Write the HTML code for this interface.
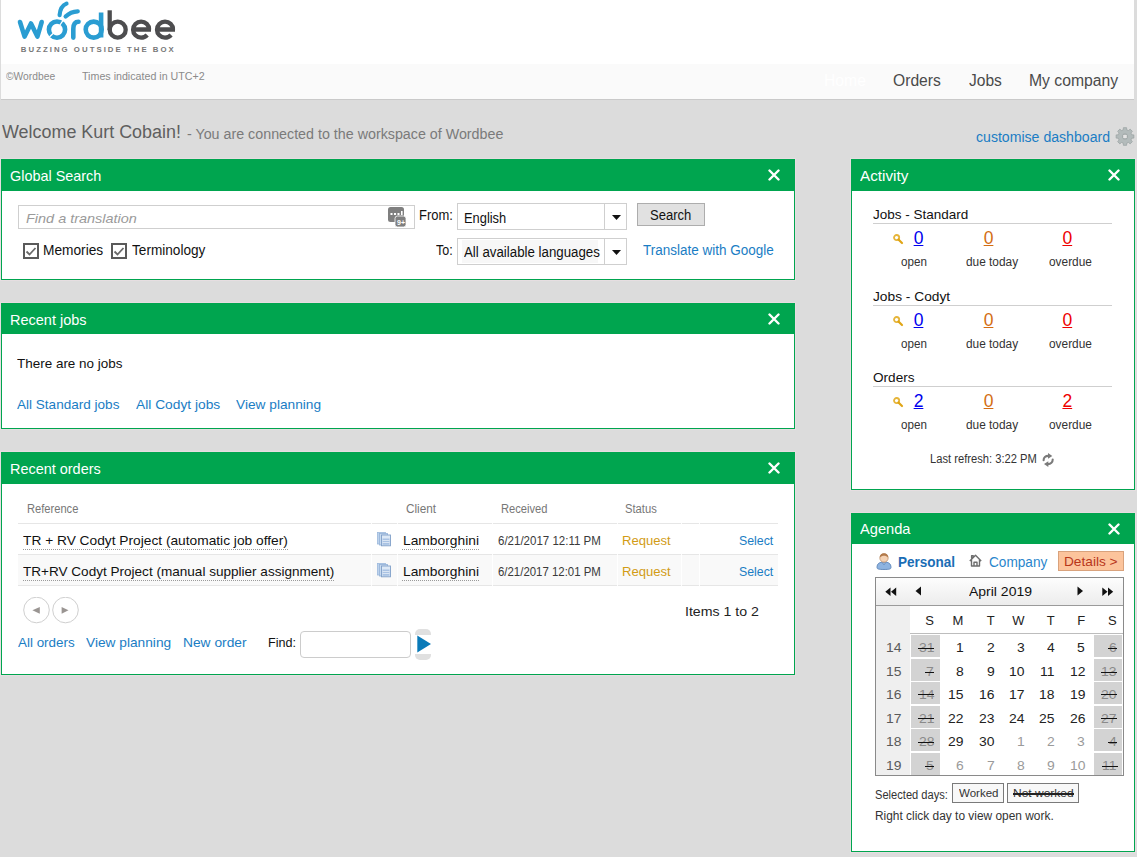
<!DOCTYPE html>
<html><head><meta charset="utf-8"><style>
html,body{margin:0;padding:0;}
body{width:1137px;height:857px;background:#dcdcdc;position:relative;overflow:hidden;font-family:"Liberation Sans", sans-serif;}
.t{position:absolute;white-space:nowrap;}
.b{position:absolute;}
.st s{text-decoration:none;background:linear-gradient(#111,#111) no-repeat 0 58%/100% 1.3px;}
</style></head><body>
<div class="b" style="left:1px;top:0px;width:1133px;height:64px;background:#fff;"></div>
<div class="b" style="left:1px;top:64px;width:1133px;height:35px;background:#fafafa;"></div>
<div class="b" style="left:1px;top:99px;width:1133px;height:1px;background:#c9c9c9;"></div>
<svg class="b" style="left:0;top:0" width="190" height="60" viewBox="0 0 190 60">
<g fill="none" stroke-linecap="round" stroke-linejoin="round" stroke="#2a9dd2" stroke-width="4.6">
<path d="M20 22 L24.6 36.6 L31 23.5 L37.4 36.6 L41.7 22"/>
<circle cx="57" cy="29.6" r="8.1"/>
<path d="M59.6 15.2 C60 9 62.5 5.2 66.5 3.6" stroke-width="4.2"/>
<path d="M65.6 16.6 C69 13.2 73 11.6 77.8 11.4" stroke-width="4.2"/>
<path d="M73.3 37.6 L73.3 29 C73.3 23.5 75.5 21.7 78.5 21.7"/>
<circle cx="93.7" cy="29.6" r="8"/>
<path d="M101.1 12.5 L101.1 37.5" stroke-linecap="butt"/>
</g>
<g stroke="#fff" stroke-width="1.3"><path d="M59.9 25 L63.6 19.6"/><path d="M53.6 33 L49.4 36.9"/></g>
<g fill="none" stroke="#4d4d4f" stroke-width="4.3">
<path d="M109.7 10.3 L109.7 30"/>
<circle cx="117.7" cy="29.65" r="8"/>
<path d="M133 29.5 L151 29.5 M149.1 29.5 C149.1 25 145.5 21.6 141.1 21.6 C136.7 21.6 133.1 25.2 133.1 29.65 C133.1 34.1 136.7 37.7 141.1 37.7 C143.6 37.7 145.6 36.7 147.2 35"/>
<path d="M157 29.5 L175 29.5 M173 29.5 C173 25 169.4 21.6 165 21.6 C160.6 21.6 157 25.2 157 29.65 C157 34.1 160.6 37.7 165 37.7 C167.5 37.7 169.5 36.7 171.1 35"/>
</g>
<text x="20.8" y="52" font-family="Liberation Sans" font-weight="bold" font-size="7.8" fill="#787878" textLength="153" lengthAdjust="spacing">BUZZING OUTSIDE THE BOX</text>
</svg>
<div class="t " style="left:5.80px;transform:scaleX(0.9793);transform-origin:0 0;top:71.31px;font-size:10.5px;line-height:10.5px;color:#8a8a8a;">&copy;Wordbee</div>
<div class="t " style="left:81.80px;transform:scaleX(1.0166);transform-origin:0 0;top:71.31px;font-size:10.5px;line-height:10.5px;color:#8a8a8a;">Times indicated in UTC+2</div>
<div class="t " style="left:823.70px;transform:scaleX(0.9808);transform-origin:0 0;top:72.66px;font-size:16px;line-height:16px;color:#ffffff;">Home</div>
<div class="t " style="left:893.20px;transform:scaleX(0.9779);transform-origin:0 0;top:72.66px;font-size:16px;line-height:16px;color:#4a4a4a;">Orders</div>
<div class="t " style="left:968.70px;transform:scaleX(0.9716);transform-origin:0 0;top:72.66px;font-size:16px;line-height:16px;color:#4a4a4a;">Jobs</div>
<div class="t " style="left:1029.40px;transform:scaleX(0.9832);transform-origin:0 0;top:72.66px;font-size:16px;line-height:16px;color:#4a4a4a;">My company</div>
<div class="t " style="left:2.10px;transform:scaleX(0.9954);transform-origin:0 0;top:123.46px;font-size:18px;line-height:18px;color:#5f5f5f;">Welcome Kurt Cobain!</div>
<div class="t " style="left:187.30px;transform:scaleX(1.0196);transform-origin:0 0;top:127.05px;font-size:14px;line-height:14px;color:#7a7a7a;">- You are connected to the workspace of Wordbee</div>
<div class="t " style="left:976.20px;transform:scaleX(1.0070);transform-origin:0 0;top:130.35px;font-size:14px;line-height:14px;color:#1a7dc4;">customise dashboard</div>
<svg class="b" style="left:1114.5px;top:126.5px" width="20" height="19" viewBox="0 0 20 19">
<path d="M16.68 7.78 L18.86 7.92 L18.86 11.08 L16.68 11.22 L15.94 13.01 L17.38 14.65 L15.15 16.88 L13.51 15.44 L11.72 16.18 L11.58 18.36 L8.42 18.36 L8.28 16.18 L6.49 15.44 L4.85 16.88 L2.62 14.65 L4.06 13.01 L3.32 11.22 L1.14 11.08 L1.14 7.92 L3.32 7.78 L4.06 5.99 L2.62 4.35 L4.85 2.12 L6.49 3.56 L8.28 2.82 L8.42 0.64 L11.58 0.64 L11.72 2.82 L13.51 3.56 L15.15 2.12 L17.38 4.35 L15.94 5.99Z" fill="#b3bbbb" stroke="#98a1a1" stroke-width="0.7" stroke-linejoin="round"/>
<rect x="7.7" y="7.2" width="4.6" height="4.6" rx="1.2" fill="#e4e4e4" stroke="#8f9898" stroke-width="0.8"/></svg>
<div class="b" style="left:0px;top:158px;width:796px;height:123px;background:#e6dee1;"></div>
<div class="b" style="left:1px;top:159px;width:794px;height:121px;background:#fff;border:1px solid #00a54f;box-sizing:border-box;"></div>
<div class="b" style="left:1px;top:159px;width:794px;height:32px;background:#00a54f;"></div>
<div class="t " style="left:10.30px;transform:scaleX(0.9939);transform-origin:0 0;top:168.93px;font-size:14.5px;line-height:14.5px;color:#fff;">Global Search</div>
<svg class="b" style="left:767.7px;top:169px" width="12" height="12" viewBox="0 0 12 12"><path d="M1.5 1.5L10.5 10.5M10.5 1.5L1.5 10.5" stroke="#fff" stroke-width="2.4" stroke-linecap="round"/></svg>
<div class="b" style="left:18px;top:205px;width:397px;height:24px;background:#fff;border:1px solid #cfcfcf;box-sizing:border-box;"></div>
<div class="t " style="left:25.50px;transform:scaleX(1.0710);transform-origin:0 0;top:212.27px;font-size:13.5px;line-height:13.5px;color:#9a9a9a;font-style:italic;">Find a translation</div>
<svg class="b" style="left:387px;top:206px" width="21" height="22" viewBox="0 0 21 22">
<rect x="1" y="1" width="16" height="15" rx="2.5" fill="#7f7f7f"/>
<rect x="8" y="10" width="11" height="11" rx="2.5" fill="#7f7f7f" stroke="#fff" stroke-width="0.8"/>
<g fill="#fff"><rect x="3.5" y="7" width="2" height="2"/><rect x="7" y="7" width="2" height="2"/><rect x="10.5" y="7" width="2" height="2"/><rect x="14" y="5" width="1.6" height="4"/></g>
<text x="10" y="19" font-family="Liberation Sans" font-weight="bold" font-size="7" fill="#fff">9+</text>
</svg>
<div class="b" style="left:23px;top:243px;width:16px;height:16px;border:2px solid #5a5a5a;box-sizing:border-box;background:#fff;"></div>
<svg class="b" style="left:23px;top:243px" width="16" height="16" viewBox="0 0 16 16"><path d="M3.5 8.5L6.5 11.5L12.5 5" fill="none" stroke="#6a6a6a" stroke-width="1.8"/></svg>
<div class="b" style="left:111px;top:243px;width:16px;height:16px;border:2px solid #5a5a5a;box-sizing:border-box;background:#fff;"></div>
<svg class="b" style="left:111px;top:243px" width="16" height="16" viewBox="0 0 16 16"><path d="M3.5 8.5L6.5 11.5L12.5 5" fill="none" stroke="#6a6a6a" stroke-width="1.8"/></svg>
<div class="t " style="left:42.70px;transform:scaleX(0.9795);transform-origin:0 0;top:243.15px;font-size:14px;line-height:14px;color:#111;">Memories</div>
<div class="t " style="left:132.10px;transform:scaleX(0.9727);transform-origin:0 0;top:243.15px;font-size:14px;line-height:14px;color:#111;">Terminology</div>
<div class="t " style="left:418.80px;transform:scaleX(0.9278);transform-origin:0 0;top:207.95px;font-size:14px;line-height:14px;color:#111;">From:</div>
<div class="t " style="left:436.00px;transform:scaleX(0.8935);transform-origin:0 0;top:243.15px;font-size:14px;line-height:14px;color:#111;">To:</div>
<div class="b" style="left:457px;top:203px;width:170px;height:27px;background:#fff;border:1px solid #cfcfcf;box-sizing:border-box;"></div>
<div class="b" style="left:604px;top:203px;width:1px;height:27px;background:#cfcfcf;"></div>
<svg class="b" style="left:611.5px;top:214.5px" width="9" height="5" viewBox="0 0 9 5"><path d="M0 0L9 0L4.5 5Z" fill="#111"/></svg>
<div class="b" style="left:457px;top:238px;width:170px;height:27px;background:#fff;border:1px solid #cfcfcf;box-sizing:border-box;"></div>
<div class="b" style="left:604px;top:238px;width:1px;height:27px;background:#cfcfcf;"></div>
<svg class="b" style="left:611.5px;top:249.5px" width="9" height="5" viewBox="0 0 9 5"><path d="M0 0L9 0L4.5 5Z" fill="#111"/></svg>
<div class="b" style="left:462px;top:240px;width:136px;height:23px;background:#f7f7f7;"></div>
<div class="t " style="left:464.30px;transform:scaleX(0.9190);transform-origin:0 0;top:210.85px;font-size:14px;line-height:14px;color:#111;">English</div>
<div class="t " style="left:464.30px;transform:scaleX(0.9489);transform-origin:0 0;top:244.65px;font-size:14px;line-height:14px;color:#111;">All available languages</div>
<div class="b" style="left:637px;top:203px;width:68px;height:23px;background:#e1e1e1;border:1px solid #adadad;box-sizing:border-box;"></div>
<div class="t " style="left:650.20px;transform:scaleX(0.9306);transform-origin:0 0;top:208.35px;font-size:14px;line-height:14px;color:#111;">Search</div>
<div class="t " style="left:643.00px;transform:scaleX(0.9642);transform-origin:0 0;top:242.85px;font-size:14px;line-height:14px;color:#1a7dc4;">Translate with Google</div>
<div class="b" style="left:0px;top:302px;width:796px;height:128px;background:#e6dee1;"></div>
<div class="b" style="left:1px;top:303px;width:794px;height:126px;background:#fff;border:1px solid #00a54f;box-sizing:border-box;"></div>
<div class="b" style="left:1px;top:303px;width:794px;height:31px;background:#00a54f;"></div>
<div class="t " style="left:10.30px;transform:scaleX(0.9992);transform-origin:0 0;top:312.53px;font-size:14.5px;line-height:14.5px;color:#fff;">Recent jobs</div>
<svg class="b" style="left:767.7px;top:313px" width="12" height="12" viewBox="0 0 12 12"><path d="M1.5 1.5L10.5 10.5M10.5 1.5L1.5 10.5" stroke="#fff" stroke-width="2.4" stroke-linecap="round"/></svg>
<div class="t " style="left:17.40px;transform:scaleX(0.9968);transform-origin:0 0;top:356.57px;font-size:13.5px;line-height:13.5px;color:#111;">There are no jobs</div>
<div class="t " style="left:17.40px;transform:scaleX(1.0033);transform-origin:0 0;top:398.27px;font-size:13.5px;line-height:13.5px;color:#1a7dc4;">All Standard jobs</div>
<div class="t " style="left:135.50px;transform:scaleX(1.0200);transform-origin:0 0;top:398.27px;font-size:13.5px;line-height:13.5px;color:#1a7dc4;">All Codyt jobs</div>
<div class="t " style="left:236.10px;transform:scaleX(1.0151);transform-origin:0 0;top:398.27px;font-size:13.5px;line-height:13.5px;color:#1a7dc4;">View planning</div>
<div class="b" style="left:0px;top:451px;width:796px;height:225px;background:#e6dee1;"></div>
<div class="b" style="left:1px;top:452px;width:794px;height:223px;background:#fff;border:1px solid #00a54f;box-sizing:border-box;"></div>
<div class="b" style="left:1px;top:452px;width:794px;height:32px;background:#00a54f;"></div>
<div class="t " style="left:10.30px;transform:scaleX(0.9960);transform-origin:0 0;top:461.53px;font-size:14.5px;line-height:14.5px;color:#fff;">Recent orders</div>
<svg class="b" style="left:767.7px;top:462px" width="12" height="12" viewBox="0 0 12 12"><path d="M1.5 1.5L10.5 10.5M10.5 1.5L1.5 10.5" stroke="#fff" stroke-width="2.4" stroke-linecap="round"/></svg>
<div class="t " style="left:26.70px;transform:scaleX(0.9281);transform-origin:0 0;top:502.84px;font-size:12px;line-height:12px;color:#777;">Reference</div>
<div class="t " style="left:405.70px;transform:scaleX(0.9817);transform-origin:0 0;top:502.84px;font-size:12px;line-height:12px;color:#777;">Client</div>
<div class="t " style="left:501.00px;transform:scaleX(0.9293);transform-origin:0 0;top:502.84px;font-size:12px;line-height:12px;color:#777;">Received</div>
<div class="t " style="left:625.00px;transform:scaleX(0.9347);transform-origin:0 0;top:502.84px;font-size:12px;line-height:12px;color:#777;">Status</div>
<div class="b" style="left:18px;top:523px;width:760px;height:1px;background:#e6e6e6;"></div>
<div class="b" style="left:18px;top:554px;width:760px;height:1px;background:#e6e6e6;"></div>
<div class="b" style="left:18px;top:555px;width:760px;height:30px;background:#f9f9f9;"></div>
<div class="b" style="left:18px;top:585px;width:760px;height:1px;background:#e6e6e6;"></div>
<div class="b" style="left:371px;top:523px;width:1px;height:63px;background:rgba(255,255,255,0.9);"></div>
<div class="b" style="left:397px;top:523px;width:1px;height:63px;background:rgba(255,255,255,0.9);"></div>
<div class="b" style="left:492px;top:523px;width:1px;height:63px;background:rgba(255,255,255,0.9);"></div>
<div class="b" style="left:617px;top:523px;width:1px;height:63px;background:rgba(255,255,255,0.9);"></div>
<div class="b" style="left:681px;top:523px;width:1px;height:63px;background:rgba(255,255,255,0.9);"></div>
<div class="b" style="left:699px;top:523px;width:1px;height:63px;background:rgba(255,255,255,0.9);"></div>
<div class="t " style="left:23.10px;transform:scaleX(1.0176);transform-origin:0 0;top:534.17px;font-size:13.5px;line-height:13.5px;color:#111;">TR + RV Codyt Project (automatic job offer)</div>
<div class="b" style="left:23px;top:549.1px;width:264.9px;height:1px;border-top:1px dotted #9a9a9a;box-sizing:border-box;"></div>
<div class="t " style="left:402.50px;transform:scaleX(1.0226);transform-origin:0 0;top:534.17px;font-size:13.5px;line-height:13.5px;color:#111;">Lamborghini</div>
<div class="b" style="left:402px;top:549.1px;width:77px;height:1px;border-top:1px dotted #9a9a9a;box-sizing:border-box;"></div>
<div class="t " style="left:498.00px;transform:scaleX(0.9588);transform-origin:0 0;top:535.14px;font-size:12px;line-height:12px;color:#3a3a3a;">6/21/2017 12:11 PM</div>
<div class="t " style="left:622.00px;transform:scaleX(1.0057);transform-origin:0 0;top:533.50px;font-size:13px;line-height:13px;color:#d29c16;">Request</div>
<div class="t " style="left:739.30px;transform:scaleX(0.9139);transform-origin:0 0;top:534.17px;font-size:13.5px;line-height:13.5px;color:#1a7dc4;">Select</div>
<svg class="b" style="left:377px;top:532.1px" width="15" height="15" viewBox="0 0 15 15">
<rect x="0.5" y="0.5" width="8" height="11.5" fill="#bcd2ec" stroke="#9cb8dc" stroke-width="0.8"/>
<rect x="2.5" y="1.5" width="8" height="11.5" fill="#c8dbf0" stroke="#94b2d8" stroke-width="0.8"/>
<rect x="4.5" y="3" width="9" height="10.8" fill="#dce8f6" stroke="#7f9fc8" stroke-width="0.9"/>
<rect x="5.5" y="6.5" width="7" height="6.3" fill="#a9c2e3"/>
<path d="M5.5 8.5H12.5M5.5 10.5H12.5" stroke="#e6eef8" stroke-width="0.8"/></svg>
<div class="t " style="left:23.10px;transform:scaleX(1.0038);transform-origin:0 0;top:565.47px;font-size:13.5px;line-height:13.5px;color:#111;">TR+RV Codyt Project (manual supplier assignment)</div>
<div class="b" style="left:23px;top:580.4px;width:311.3px;height:1px;border-top:1px dotted #9a9a9a;box-sizing:border-box;"></div>
<div class="t " style="left:402.50px;transform:scaleX(1.0226);transform-origin:0 0;top:565.47px;font-size:13.5px;line-height:13.5px;color:#111;">Lamborghini</div>
<div class="b" style="left:402px;top:580.4px;width:77px;height:1px;border-top:1px dotted #9a9a9a;box-sizing:border-box;"></div>
<div class="t " style="left:498.00px;transform:scaleX(0.9513);transform-origin:0 0;top:566.44px;font-size:12px;line-height:12px;color:#3a3a3a;">6/21/2017 12:01 PM</div>
<div class="t " style="left:622.00px;transform:scaleX(1.0057);transform-origin:0 0;top:564.80px;font-size:13px;line-height:13px;color:#d29c16;">Request</div>
<div class="t " style="left:739.30px;transform:scaleX(0.9139);transform-origin:0 0;top:565.47px;font-size:13.5px;line-height:13.5px;color:#1a7dc4;">Select</div>
<svg class="b" style="left:377px;top:563.4px" width="15" height="15" viewBox="0 0 15 15">
<rect x="0.5" y="0.5" width="8" height="11.5" fill="#bcd2ec" stroke="#9cb8dc" stroke-width="0.8"/>
<rect x="2.5" y="1.5" width="8" height="11.5" fill="#c8dbf0" stroke="#94b2d8" stroke-width="0.8"/>
<rect x="4.5" y="3" width="9" height="10.8" fill="#dce8f6" stroke="#7f9fc8" stroke-width="0.9"/>
<rect x="5.5" y="6.5" width="7" height="6.3" fill="#a9c2e3"/>
<path d="M5.5 8.5H12.5M5.5 10.5H12.5" stroke="#e6eef8" stroke-width="0.8"/></svg>
<svg class="b" style="left:23px;top:597px" width="27" height="27" viewBox="0 0 27 27"><circle cx="13.5" cy="13" r="12.8" fill="#fff" stroke="#cfcfcf" stroke-width="1"/><path d="M16.8 9.9L9.4 13.3L16.8 16.7Z" fill="#9a9592"/></svg>
<svg class="b" style="left:52px;top:597px" width="27" height="27" viewBox="0 0 27 27"><circle cx="13.5" cy="13" r="12.8" fill="#fff" stroke="#cfcfcf" stroke-width="1"/><path d="M9.6 9.9L16.5 13.3L9.6 16.7Z" fill="#9a9592"/></svg>
<div class="t " style="left:685.00px;transform:scaleX(1.0491);transform-origin:0 0;top:604.57px;font-size:13.5px;line-height:13.5px;color:#222;">Items 1 to 2</div>
<div class="t " style="left:17.60px;transform:scaleX(0.9941);transform-origin:0 0;top:636.07px;font-size:13.5px;line-height:13.5px;color:#1a7dc4;">All orders</div>
<div class="t " style="left:86.10px;transform:scaleX(1.0163);transform-origin:0 0;top:636.07px;font-size:13.5px;line-height:13.5px;color:#1a7dc4;">View planning</div>
<div class="t " style="left:183.10px;transform:scaleX(1.0208);transform-origin:0 0;top:636.07px;font-size:13.5px;line-height:13.5px;color:#1a7dc4;">New order</div>
<div class="t " style="left:267.60px;transform:scaleX(0.9322);transform-origin:0 0;top:636.07px;font-size:13.5px;line-height:13.5px;color:#111;">Find:</div>
<div class="b" style="left:300px;top:631px;width:111px;height:27px;background:#fff;border:1px solid #cccccc;border-radius:4px;box-sizing:border-box;"></div>
<div class="b" style="left:415px;top:629px;width:16px;height:31px;background:#e0e0e0;border-radius:5px;"></div>
<div class="b" style="left:415px;top:634.5px;width:16px;height:19.5px;background:#fff;"></div>
<svg class="b" style="left:417px;top:635px" width="15" height="18" viewBox="0 0 15 18"><path d="M0.3 0.5L14 9L0.3 17.5Z" fill="#0a7ab8"/></svg>
<div class="b" style="left:850px;top:158px;width:286px;height:333px;background:#e6dee1;"></div>
<div class="b" style="left:851px;top:159px;width:284px;height:331px;background:#fff;border:1px solid #00a54f;box-sizing:border-box;"></div>
<div class="b" style="left:851px;top:159px;width:284px;height:32px;background:#00a54f;"></div>
<div class="t " style="left:859.50px;transform:scaleX(1.0525);transform-origin:0 0;top:168.63px;font-size:14.5px;line-height:14.5px;color:#fff;">Activity</div>
<svg class="b" style="left:1107.7px;top:169px" width="12" height="12" viewBox="0 0 12 12"><path d="M1.5 1.5L10.5 10.5M10.5 1.5L1.5 10.5" stroke="#fff" stroke-width="2.4" stroke-linecap="round"/></svg>
<div class="t " style="left:873.10px;transform:scaleX(0.9999);transform-origin:0 0;top:208.37px;font-size:13.5px;line-height:13.5px;color:#111;">Jobs - Standard</div>
<div class="b" style="left:873px;top:223px;width:239px;height:1px;background:#cfcfcf;"></div>
<svg class="b" style="left:893.3px;top:234.3px" width="11" height="11" viewBox="0 0 11 11"><circle cx="3.6" cy="3.6" r="2.6" fill="none" stroke="#e6b53a" stroke-width="1.8"/><path d="M5.5 5.5L9 9" stroke="#e0a516" stroke-width="2.2" stroke-linecap="round"/></svg>
<div class="t " style="left:618.5px;width:600px;text-align:center;top:230.19px;font-size:17.5px;line-height:17.5px;color:#0000ee;text-decoration:underline;">0</div>
<div class="t " style="left:688.5px;width:600px;text-align:center;top:230.19px;font-size:17.5px;line-height:17.5px;color:#d36d12;text-decoration:underline;">0</div>
<div class="t " style="left:767.3px;width:600px;text-align:center;top:230.19px;font-size:17.5px;line-height:17.5px;color:#ee0000;text-decoration:underline;">0</div>
<div class="t " style="left:900.60px;transform:scaleX(0.9700);transform-origin:0 0;top:256.24px;font-size:12px;line-height:12px;color:#333;">open</div>
<div class="t " style="left:965.60px;transform:scaleX(0.9879);transform-origin:0 0;top:256.24px;font-size:12px;line-height:12px;color:#333;">due today</div>
<div class="t " style="left:1049.40px;transform:scaleX(0.9889);transform-origin:0 0;top:256.24px;font-size:12px;line-height:12px;color:#333;">overdue</div>
<div class="t " style="left:873.10px;transform:scaleX(1.0184);transform-origin:0 0;top:289.87px;font-size:13.5px;line-height:13.5px;color:#111;">Jobs - Codyt</div>
<div class="b" style="left:873px;top:304.5px;width:239px;height:1px;background:#cfcfcf;"></div>
<svg class="b" style="left:893.3px;top:315.8px" width="11" height="11" viewBox="0 0 11 11"><circle cx="3.6" cy="3.6" r="2.6" fill="none" stroke="#e6b53a" stroke-width="1.8"/><path d="M5.5 5.5L9 9" stroke="#e0a516" stroke-width="2.2" stroke-linecap="round"/></svg>
<div class="t " style="left:618.5px;width:600px;text-align:center;top:311.69px;font-size:17.5px;line-height:17.5px;color:#0000ee;text-decoration:underline;">0</div>
<div class="t " style="left:688.5px;width:600px;text-align:center;top:311.69px;font-size:17.5px;line-height:17.5px;color:#d36d12;text-decoration:underline;">0</div>
<div class="t " style="left:767.3px;width:600px;text-align:center;top:311.69px;font-size:17.5px;line-height:17.5px;color:#ee0000;text-decoration:underline;">0</div>
<div class="t " style="left:900.60px;transform:scaleX(0.9700);transform-origin:0 0;top:337.74px;font-size:12px;line-height:12px;color:#333;">open</div>
<div class="t " style="left:965.60px;transform:scaleX(0.9879);transform-origin:0 0;top:337.74px;font-size:12px;line-height:12px;color:#333;">due today</div>
<div class="t " style="left:1049.40px;transform:scaleX(0.9889);transform-origin:0 0;top:337.74px;font-size:12px;line-height:12px;color:#333;">overdue</div>
<div class="t " style="left:873.10px;transform:scaleX(1.0062);transform-origin:0 0;top:371.37px;font-size:13.5px;line-height:13.5px;color:#111;">Orders</div>
<div class="b" style="left:873px;top:386px;width:239px;height:1px;background:#cfcfcf;"></div>
<svg class="b" style="left:893.3px;top:397.3px" width="11" height="11" viewBox="0 0 11 11"><circle cx="3.6" cy="3.6" r="2.6" fill="none" stroke="#e6b53a" stroke-width="1.8"/><path d="M5.5 5.5L9 9" stroke="#e0a516" stroke-width="2.2" stroke-linecap="round"/></svg>
<div class="t " style="left:618.5px;width:600px;text-align:center;top:393.19px;font-size:17.5px;line-height:17.5px;color:#0000ee;text-decoration:underline;">2</div>
<div class="t " style="left:688.5px;width:600px;text-align:center;top:393.19px;font-size:17.5px;line-height:17.5px;color:#d36d12;text-decoration:underline;">0</div>
<div class="t " style="left:767.3px;width:600px;text-align:center;top:393.19px;font-size:17.5px;line-height:17.5px;color:#ee0000;text-decoration:underline;">2</div>
<div class="t " style="left:900.60px;transform:scaleX(0.9700);transform-origin:0 0;top:419.24px;font-size:12px;line-height:12px;color:#333;">open</div>
<div class="t " style="left:965.60px;transform:scaleX(0.9879);transform-origin:0 0;top:419.24px;font-size:12px;line-height:12px;color:#333;">due today</div>
<div class="t " style="left:1049.40px;transform:scaleX(0.9889);transform-origin:0 0;top:419.24px;font-size:12px;line-height:12px;color:#333;">overdue</div>
<div class="t " style="left:929.60px;transform:scaleX(0.9310);transform-origin:0 0;top:453.44px;font-size:12px;line-height:12px;color:#333;">Last refresh: 3:22 PM</div>
<svg class="b" style="left:1041px;top:452px" width="14" height="16" viewBox="0 0 14 16"><g fill="none" stroke="#7a7a7a" stroke-width="2.1" stroke-linecap="round"><path d="M2.6 8.2C2.6 5.6 4.5 3.9 7.3 3.9"/><path d="M11.7 7.6C11.7 10.3 9.8 12.1 7 12.1"/></g><g fill="#7a7a7a"><path d="M7 1L11.3 3.9L7 6.8Z"/><path d="M7.3 9.2L3 12.1L7.3 15Z"/></g></svg>
<div class="b" style="left:850px;top:512px;width:286px;height:341px;background:#e6dee1;"></div>
<div class="b" style="left:851px;top:513px;width:284px;height:339px;background:#fff;border:1px solid #00a54f;box-sizing:border-box;"></div>
<div class="b" style="left:851px;top:513px;width:284px;height:31px;background:#00a54f;"></div>
<div class="t " style="left:859.50px;transform:scaleX(1.0095);transform-origin:0 0;top:522.23px;font-size:14.5px;line-height:14.5px;color:#fff;">Agenda</div>
<svg class="b" style="left:1107.7px;top:523px" width="12" height="12" viewBox="0 0 12 12"><path d="M1.5 1.5L10.5 10.5M10.5 1.5L1.5 10.5" stroke="#fff" stroke-width="2.4" stroke-linecap="round"/></svg>
<svg class="b" style="left:876px;top:552px" width="16" height="18" viewBox="0 0 16 18">
<path d="M1 15.5C1 11.5 3.5 10 8 10C12.5 10 15 11.5 15 15.5C15 17 13.5 17.5 8 17.5C2.5 17.5 1 17 1 15.5Z" fill="#8db3e0" stroke="#5f86b8" stroke-width="0.9"/>
<path d="M6 10.5L8 13L10 10.5" fill="none" stroke="#6d92c2" stroke-width="0.8"/>
<circle cx="8" cy="6" r="4.2" fill="#f4d2b4" stroke="#b98a66" stroke-width="0.7"/>
<path d="M3.8 5.5C3.8 2.5 5.6 1.2 8 1.2C10.4 1.2 12.2 2.5 12.2 5.5C11 4.3 9.5 3.8 8 3.8C6.5 3.8 5 4.3 3.8 5.5Z" fill="#b27a4a"/>
</svg>
<div class="t " style="left:897.60px;transform:scaleX(0.9653);transform-origin:0 0;top:555.25px;font-size:14px;line-height:14px;color:#1a6db5;font-weight:bold;">Personal</div>
<svg class="b" style="left:969px;top:554px" width="13" height="13" viewBox="0 0 13 13"><path d="M0.8 7L6.5 1.3L12.2 7M2.5 5.5V12H10.5V5.5M5 12V8.3H8V12M2.6 4.6V1.6H4.2V3" fill="none" stroke="#6e6e6e" stroke-width="1.4" stroke-linejoin="round"/></svg>
<div class="t " style="left:988.50px;transform:scaleX(0.9730);transform-origin:0 0;top:555.25px;font-size:14px;line-height:14px;color:#2a86cc;">Company</div>
<div class="b" style="left:1058px;top:551px;width:66px;height:20px;background:#fcc49c;border:1px solid #d9a27c;box-sizing:border-box;"></div>
<div class="t " style="left:1064.30px;transform:scaleX(1.0128);transform-origin:0 0;top:555.07px;font-size:13.5px;line-height:13.5px;color:#b8361a;">Details &gt;</div>
<div class="b" style="left:875px;top:577px;width:249px;height:199px;background:#fff;border:1px solid #8a8a8a;box-sizing:border-box;"></div>
<div class="b" style="left:876px;top:578px;width:247px;height:27px;background:linear-gradient(#fdfdfd,#ececec);"></div>
<div class="b" style="left:876px;top:605px;width:247px;height:1px;background:#9a9a9a;"></div>
<div class="b" style="left:876px;top:606px;width:34px;height:169px;background:#efefef;"></div>
<div class="b" style="left:910px;top:633px;width:213px;height:1px;background:#bdbdbd;"></div>
<svg class="b" style="left:884.5px;top:586.5px" width="12" height="10" viewBox="0 0 12 10"><path d="M5.5 0.5L0.3 4.8L5.5 9.1Z M11.2 0.5L6 4.8L11.2 9.1Z" fill="#111"/></svg>
<svg class="b" style="left:915px;top:586px" width="7" height="10" viewBox="0 0 7 10"><path d="M6 0.5L0.5 5L6 9.5Z" fill="#111"/></svg>
<svg class="b" style="left:1077px;top:586px" width="7" height="10" viewBox="0 0 7 10"><path d="M0.5 0.5L6 5L0.5 9.5Z" fill="#111"/></svg>
<svg class="b" style="left:1101.5px;top:586.5px" width="12" height="10" viewBox="0 0 12 10"><path d="M0.3 0.5L5.5 4.8L0.3 9.1Z M6 0.5L11.2 4.8L6 9.1Z" fill="#111"/></svg>
<div class="t " style="left:968.70px;transform:scaleX(1.0359);transform-origin:0 0;top:585.27px;font-size:13.5px;line-height:13.5px;color:#111;">April 2019</div>
<div class="t " style="right:203px;top:614.40px;font-size:13px;line-height:13px;color:#222;">S</div>
<div class="t " style="right:173.60000000000002px;top:614.40px;font-size:13px;line-height:13px;color:#222;">M</div>
<div class="t " style="right:142.39999999999998px;top:614.40px;font-size:13px;line-height:13px;color:#222;">T</div>
<div class="t " style="right:112.5px;top:614.40px;font-size:13px;line-height:13px;color:#222;">W</div>
<div class="t " style="right:82.20000000000005px;top:614.40px;font-size:13px;line-height:13px;color:#222;">T</div>
<div class="t " style="right:51.799999999999955px;top:614.40px;font-size:13px;line-height:13px;color:#222;">F</div>
<div class="t " style="right:20.299999999999955px;top:614.40px;font-size:13px;line-height:13px;color:#222;">S</div>
<div class="t " style="left:885.86px;transform:scaleX(1.0700);transform-origin:0 0;top:640.70px;font-size:13px;line-height:13px;color:#5a5a5a;">14</div>
<div class="b" style="left:911px;top:635px;width:29px;height:22px;background:#d3d3d3;"></div>
<div class="b" style="left:1094px;top:635px;width:28px;height:22px;background:#d3d3d3;"></div>
<div class="t " style="left:918.56px;transform:scaleX(1.0700);transform-origin:0 0;top:640.70px;font-size:13px;line-height:13px;color:#8a8a8a;">31</div>
<div class="b" style="left:918px;top:648px;width:16px;height:1px;background:#111;"></div>
<div class="t " style="left:955.68px;transform:scaleX(1.0700);transform-origin:0 0;top:640.70px;font-size:13px;line-height:13px;color:#222;">1</div>
<div class="t " style="left:986.88px;transform:scaleX(1.0700);transform-origin:0 0;top:640.70px;font-size:13px;line-height:13px;color:#222;">2</div>
<div class="t " style="left:1016.78px;transform:scaleX(1.0700);transform-origin:0 0;top:640.70px;font-size:13px;line-height:13px;color:#222;">3</div>
<div class="t " style="left:1047.08px;transform:scaleX(1.0700);transform-origin:0 0;top:640.70px;font-size:13px;line-height:13px;color:#222;">4</div>
<div class="t " style="left:1077.48px;transform:scaleX(1.0700);transform-origin:0 0;top:640.70px;font-size:13px;line-height:13px;color:#222;">5</div>
<div class="t " style="left:1108.98px;transform:scaleX(1.0700);transform-origin:0 0;top:640.70px;font-size:13px;line-height:13px;color:#8a8a8a;">6</div>
<div class="b" style="left:1108px;top:648px;width:9px;height:1px;background:#111;"></div>
<div class="t " style="left:885.86px;transform:scaleX(1.0700);transform-origin:0 0;top:664.70px;font-size:13px;line-height:13px;color:#5a5a5a;">15</div>
<div class="b" style="left:911px;top:659px;width:29px;height:22px;background:#d3d3d3;"></div>
<div class="b" style="left:1094px;top:659px;width:28px;height:22px;background:#d3d3d3;"></div>
<div class="t " style="left:926.28px;transform:scaleX(1.0700);transform-origin:0 0;top:664.70px;font-size:13px;line-height:13px;color:#8a8a8a;">7</div>
<div class="b" style="left:925px;top:672px;width:9px;height:1px;background:#111;"></div>
<div class="t " style="left:955.68px;transform:scaleX(1.0700);transform-origin:0 0;top:664.70px;font-size:13px;line-height:13px;color:#222;">8</div>
<div class="t " style="left:986.88px;transform:scaleX(1.0700);transform-origin:0 0;top:664.70px;font-size:13px;line-height:13px;color:#222;">9</div>
<div class="t " style="left:1009.06px;transform:scaleX(1.0700);transform-origin:0 0;top:664.70px;font-size:13px;line-height:13px;color:#222;">10</div>
<div class="t " style="left:1040.33px;transform:scaleX(1.0700);transform-origin:0 0;top:664.70px;font-size:13px;line-height:13px;color:#222;">11</div>
<div class="t " style="left:1069.76px;transform:scaleX(1.0700);transform-origin:0 0;top:664.70px;font-size:13px;line-height:13px;color:#222;">12</div>
<div class="t " style="left:1101.26px;transform:scaleX(1.0700);transform-origin:0 0;top:664.70px;font-size:13px;line-height:13px;color:#8a8a8a;">13</div>
<div class="b" style="left:1101px;top:672px;width:16px;height:1px;background:#111;"></div>
<div class="t " style="left:885.86px;transform:scaleX(1.0700);transform-origin:0 0;top:687.70px;font-size:13px;line-height:13px;color:#5a5a5a;">16</div>
<div class="b" style="left:911px;top:682px;width:29px;height:22px;background:#d3d3d3;"></div>
<div class="b" style="left:1094px;top:682px;width:28px;height:22px;background:#d3d3d3;"></div>
<div class="t " style="left:918.56px;transform:scaleX(1.0700);transform-origin:0 0;top:687.70px;font-size:13px;line-height:13px;color:#8a8a8a;">14</div>
<div class="b" style="left:918px;top:694px;width:16px;height:1px;background:#111;"></div>
<div class="t " style="left:947.96px;transform:scaleX(1.0700);transform-origin:0 0;top:687.70px;font-size:13px;line-height:13px;color:#222;">15</div>
<div class="t " style="left:979.16px;transform:scaleX(1.0700);transform-origin:0 0;top:687.70px;font-size:13px;line-height:13px;color:#222;">16</div>
<div class="t " style="left:1009.06px;transform:scaleX(1.0700);transform-origin:0 0;top:687.70px;font-size:13px;line-height:13px;color:#222;">17</div>
<div class="t " style="left:1039.36px;transform:scaleX(1.0700);transform-origin:0 0;top:687.70px;font-size:13px;line-height:13px;color:#222;">18</div>
<div class="t " style="left:1069.76px;transform:scaleX(1.0700);transform-origin:0 0;top:687.70px;font-size:13px;line-height:13px;color:#222;">19</div>
<div class="t " style="left:1101.26px;transform:scaleX(1.0700);transform-origin:0 0;top:687.70px;font-size:13px;line-height:13px;color:#8a8a8a;">20</div>
<div class="b" style="left:1101px;top:694px;width:16px;height:1px;background:#111;"></div>
<div class="t " style="left:885.86px;transform:scaleX(1.0700);transform-origin:0 0;top:711.70px;font-size:13px;line-height:13px;color:#5a5a5a;">17</div>
<div class="b" style="left:911px;top:706px;width:29px;height:22px;background:#d3d3d3;"></div>
<div class="b" style="left:1094px;top:706px;width:28px;height:22px;background:#d3d3d3;"></div>
<div class="t " style="left:918.56px;transform:scaleX(1.0700);transform-origin:0 0;top:711.70px;font-size:13px;line-height:13px;color:#8a8a8a;">21</div>
<div class="b" style="left:918px;top:718px;width:16px;height:1px;background:#111;"></div>
<div class="t " style="left:947.96px;transform:scaleX(1.0700);transform-origin:0 0;top:711.70px;font-size:13px;line-height:13px;color:#222;">22</div>
<div class="t " style="left:979.16px;transform:scaleX(1.0700);transform-origin:0 0;top:711.70px;font-size:13px;line-height:13px;color:#222;">23</div>
<div class="t " style="left:1009.06px;transform:scaleX(1.0700);transform-origin:0 0;top:711.70px;font-size:13px;line-height:13px;color:#222;">24</div>
<div class="t " style="left:1039.36px;transform:scaleX(1.0700);transform-origin:0 0;top:711.70px;font-size:13px;line-height:13px;color:#222;">25</div>
<div class="t " style="left:1069.76px;transform:scaleX(1.0700);transform-origin:0 0;top:711.70px;font-size:13px;line-height:13px;color:#222;">26</div>
<div class="t " style="left:1101.26px;transform:scaleX(1.0700);transform-origin:0 0;top:711.70px;font-size:13px;line-height:13px;color:#8a8a8a;">27</div>
<div class="b" style="left:1101px;top:718px;width:16px;height:1px;background:#111;"></div>
<div class="t " style="left:885.86px;transform:scaleX(1.0700);transform-origin:0 0;top:734.70px;font-size:13px;line-height:13px;color:#5a5a5a;">18</div>
<div class="b" style="left:911px;top:729px;width:29px;height:22px;background:#d3d3d3;"></div>
<div class="b" style="left:1094px;top:729px;width:28px;height:22px;background:#d3d3d3;"></div>
<div class="t " style="left:918.56px;transform:scaleX(1.0700);transform-origin:0 0;top:734.70px;font-size:13px;line-height:13px;color:#8a8a8a;">28</div>
<div class="b" style="left:918px;top:742px;width:16px;height:1px;background:#111;"></div>
<div class="t " style="left:947.96px;transform:scaleX(1.0700);transform-origin:0 0;top:734.70px;font-size:13px;line-height:13px;color:#222;">29</div>
<div class="t " style="left:979.16px;transform:scaleX(1.0700);transform-origin:0 0;top:734.70px;font-size:13px;line-height:13px;color:#222;">30</div>
<div class="t " style="left:1016.78px;transform:scaleX(1.0700);transform-origin:0 0;top:734.70px;font-size:13px;line-height:13px;color:#9a9a9a;">1</div>
<div class="t " style="left:1047.08px;transform:scaleX(1.0700);transform-origin:0 0;top:734.70px;font-size:13px;line-height:13px;color:#9a9a9a;">2</div>
<div class="t " style="left:1077.48px;transform:scaleX(1.0700);transform-origin:0 0;top:734.70px;font-size:13px;line-height:13px;color:#9a9a9a;">3</div>
<div class="t " style="left:1108.98px;transform:scaleX(1.0700);transform-origin:0 0;top:734.70px;font-size:13px;line-height:13px;color:#8a8a8a;">4</div>
<div class="b" style="left:1108px;top:742px;width:9px;height:1px;background:#111;"></div>
<div class="t " style="left:885.86px;transform:scaleX(1.0700);transform-origin:0 0;top:758.70px;font-size:13px;line-height:13px;color:#5a5a5a;">19</div>
<div class="b" style="left:911px;top:753px;width:29px;height:22px;background:#d3d3d3;"></div>
<div class="b" style="left:1094px;top:753px;width:28px;height:22px;background:#d3d3d3;"></div>
<div class="t " style="left:926.28px;transform:scaleX(1.0700);transform-origin:0 0;top:758.70px;font-size:13px;line-height:13px;color:#8a8a8a;">5</div>
<div class="b" style="left:925px;top:766px;width:9px;height:1px;background:#111;"></div>
<div class="t " style="left:955.68px;transform:scaleX(1.0700);transform-origin:0 0;top:758.70px;font-size:13px;line-height:13px;color:#9a9a9a;">6</div>
<div class="t " style="left:986.88px;transform:scaleX(1.0700);transform-origin:0 0;top:758.70px;font-size:13px;line-height:13px;color:#9a9a9a;">7</div>
<div class="t " style="left:1016.78px;transform:scaleX(1.0700);transform-origin:0 0;top:758.70px;font-size:13px;line-height:13px;color:#9a9a9a;">8</div>
<div class="t " style="left:1047.08px;transform:scaleX(1.0700);transform-origin:0 0;top:758.70px;font-size:13px;line-height:13px;color:#9a9a9a;">9</div>
<div class="t " style="left:1069.76px;transform:scaleX(1.0700);transform-origin:0 0;top:758.70px;font-size:13px;line-height:13px;color:#9a9a9a;">10</div>
<div class="t " style="left:1102.23px;transform:scaleX(1.0700);transform-origin:0 0;top:758.70px;font-size:13px;line-height:13px;color:#8a8a8a;">11</div>
<div class="b" style="left:1102px;top:766px;width:16px;height:1px;background:#111;"></div>
<div class="t " style="left:875.10px;transform:scaleX(0.9261);transform-origin:0 0;top:788.64px;font-size:12px;line-height:12px;color:#333;">Selected days:</div>
<div class="b" style="left:952px;top:783px;width:52px;height:20px;background:#f8f8f8;border:1px solid #7a7a7a;box-sizing:border-box;"></div>
<div class="t " style="left:958.50px;transform:scaleX(1.0029);transform-origin:0 0;top:787.77px;font-size:11.5px;line-height:11.5px;color:#333;">Worked</div>
<div class="b" style="left:1007px;top:783px;width:72px;height:20px;background:#f8f8f8;border:1px solid #7a7a7a;box-sizing:border-box;"></div>
<div class="t " style="left:1013.20px;transform:scaleX(1.0431);transform-origin:0 0;top:787.77px;font-size:11.5px;line-height:11.5px;color:#333;">Not worked</div>
<div class="b" style="left:1013px;top:793.3px;width:61px;height:1.3px;background:#222;"></div>
<div class="t " style="left:875.30px;transform:scaleX(0.9924);transform-origin:0 0;top:809.64px;font-size:12px;line-height:12px;color:#333;">Right click day to view open work.</div>
</body></html>
